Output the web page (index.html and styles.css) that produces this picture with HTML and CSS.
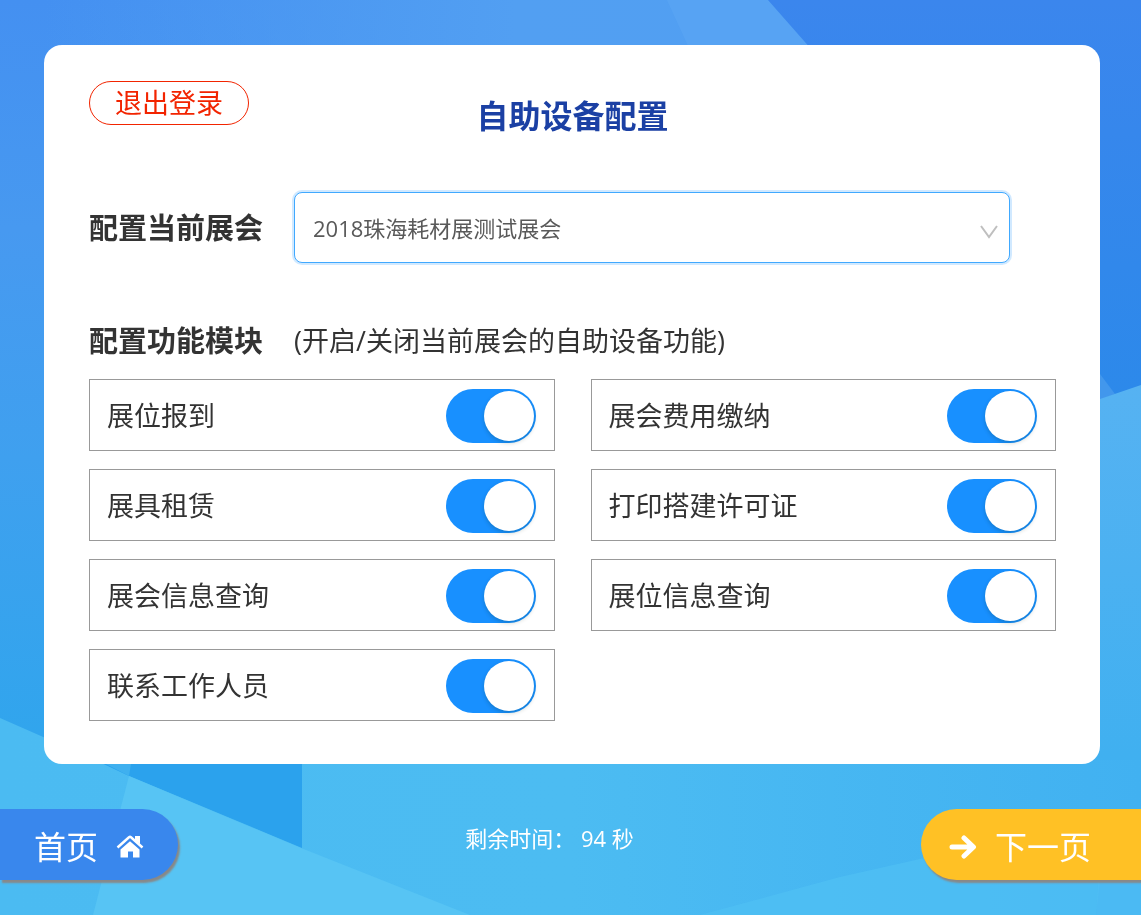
FILE: index.html
```html
<!DOCTYPE html>
<html lang="zh-CN">
<head>
<meta charset="utf-8">
<meta name="viewport" content="width=device-width, initial-scale=1">
<title>自助设备配置</title>
<link rel="stylesheet" href="styles.css">
</head>
<body>
<svg class="backdrop" viewBox="0 0 1141 915" preserveAspectRatio="none" aria-hidden="true">
  <defs>
    <linearGradient id="base" x1="0" y1="0" x2="0" y2="1">
      <stop offset="0" stop-color="#4490f1"/>
      <stop offset="0.25" stop-color="#4799f0"/>
      <stop offset="0.5" stop-color="#3fa0ef"/>
      <stop offset="0.8" stop-color="#31a5ed"/>
      <stop offset="1" stop-color="#35a6ee"/>
    </linearGradient>
    <linearGradient id="top" x1="0" y1="0" x2="1" y2="0">
      <stop offset="0" stop-color="#529ff2" stop-opacity="0"/>
      <stop offset="0.6" stop-color="#529ff2"/>
      <stop offset="1" stop-color="#519ff2"/>
    </linearGradient>
    <linearGradient id="deep" x1="0" y1="0" x2="0" y2="1">
      <stop offset="0" stop-color="#3b86ed"/>
      <stop offset="1" stop-color="#2c89ea"/>
    </linearGradient>
    <linearGradient id="right" x1="0" y1="0" x2="0" y2="1">
      <stop offset="0" stop-color="#56b2f2"/>
      <stop offset="0.7" stop-color="#40b0f0"/>
      <stop offset="1" stop-color="#42b5f1"/>
    </linearGradient>
    <linearGradient id="floor" x1="0" y1="0" x2="1" y2="0">
      <stop offset="0" stop-color="#4bbbf2"/>
      <stop offset="0.5" stop-color="#4cbcf2"/>
      <stop offset="1" stop-color="#41b1f1"/>
    </linearGradient>
  </defs>
  <rect width="1141" height="915" fill="url(#base)"/>
  <path d="M44 0H800L830 60H44Z" fill="url(#top)"/>
  <path d="M667 0H768L812 50H690Z" fill="#5ba7f3" opacity="0.6"/>
  <path d="M768 0H1141V386L1100 400L812 50Z" fill="url(#deep)"/>
  <path d="M1100 374L1115 394L1100 400Z" fill="#4297ec"/>
  <path d="M1100 399L1141 385V915H1080Z" fill="url(#right)"/>
  <path d="M0 718L50 740L106 760H1141V915H0Z" fill="url(#floor)"/>
  <path d="M95 760H302V848L129 776Z" fill="#2ba2ed"/>
  <path d="M106 764H131L129 776Z" fill="#3fb0ef"/>
  <path d="M129 776L301 848L470 915H93Z" fill="#57c4f4"/>
  <path d="M700 915L840 877L960 850L1100 880L1096 915Z" fill="#50c0f3" opacity="0.7"/>
  <path d="M1099 870L1141 860V915H1096Z" fill="#50bdf3" opacity="0.7"/>
</svg>

<main class="panel">
  <header class="panel-head">
    <button class="logout" type="button">退出登录</button>
    <h1 class="title">自助设备配置</h1>
  </header>

  <div class="exhibition">
    <label class="label" for="exhibition">配置当前展会</label>
    <div class="select-wrap">
      <select class="select" id="exhibition">
        <option>2018珠海耗材展测试展会</option>
      </select>
      <svg class="chevron" viewBox="0 0 18 14" aria-hidden="true"><path d="M1 1L9 12L17 1"/></svg>
    </div>
  </div>

  <section class="modules">
    <div class="modules-head">
      <h2 class="label">配置功能模块</h2>
      <p class="hint">(开启/关闭当前展会的自助设备功能)</p>
    </div>
    <div class="grid">
      <label class="module"><span>展位报到</span><input class="switch" type="checkbox" role="switch" checked></label>
      <label class="module"><span>展会费用缴纳</span><input class="switch" type="checkbox" role="switch" checked></label>
      <label class="module"><span>展具租赁</span><input class="switch" type="checkbox" role="switch" checked></label>
      <label class="module"><span>打印搭建许可证</span><input class="switch" type="checkbox" role="switch" checked></label>
      <label class="module"><span>展会信息查询</span><input class="switch" type="checkbox" role="switch" checked></label>
      <label class="module"><span>展位信息查询</span><input class="switch" type="checkbox" role="switch" checked></label>
      <label class="module"><span>联系工作人员</span><input class="switch" type="checkbox" role="switch" checked></label>
    </div>
  </section>
</main>

<footer class="footer">
  <button class="nav nav-home" type="button">
    <span>首页</span>
    <svg class="icon" viewBox="0 0 28 24" aria-hidden="true">
      <path d="M14 6.200L23.500 14.500V22.500H17V16.500H12V22.500H4.500V14.500Z"/>
      <path d="M19 1H24V9L19 5Z"/>
      <path class="roof" d="M1.500 12.500L13 2.200Q14 1.500 15 2.200L26.500 12.500"/>
    </svg>
  </button>
  <p class="timer">剩余时间：&nbsp;94 秒</p>
  <button class="nav nav-next" type="button">
    <svg class="icon arrow" viewBox="0 0 28 24" aria-hidden="true"><path d="M3 12H24M15 3L24.500 12L15 21"/></svg>
    <span>下一页</span>
  </button>
</footer>
</body>
</html>
```
FILE: styles.css
```css
* {
  box-sizing: border-box;
}

body {
  margin: 0;
  min-height: 100vh;
  display: flex;
  flex-direction: column;
  color: #333;
  font-family: "Open Sans", "Noto Sans CJK SC", sans-serif;
  font-size: 27px;
  line-height: 36px;
}

h1,
h2,
p {
  margin: 0;
}

button,
select {
  font: inherit;
  cursor: pointer;
}

.backdrop {
  position: fixed;
  inset: 0;
  width: 100%;
  height: 100%;
  z-index: -1;
}

.panel {
  margin: 45px 41px 0 44px;
  padding: 36px 44px 43px 45px;
  background: #fff;
  border-radius: 18px;
}

.panel-head {
  display: grid;
  grid-template-columns: 1fr auto 1fr;
  align-items: start;
}

.logout {
  justify-self: start;
  height: 44px;
  padding: 0 25px;
  border: 1px solid #f22400;
  border-radius: 22px;
  background: none;
  color: #f22400;
  line-height: 40px;
}

.title {
  margin-top: 11px;
  color: #1b40a4;
  font-size: 32px;
  line-height: 48px;
}

.exhibition {
  display: flex;
  align-items: center;
  gap: 31px;
  margin-top: 52px;
}

.label {
  flex: none;
  font-size: 29px;
  font-weight: 700;
  line-height: 40px;
}

.select-wrap {
  position: relative;
  flex: 1;
  margin-right: 46px;
}

.select {
  display: block;
  width: 100%;
  height: 71px;
  padding: 0 48px 0 18px;
  appearance: none;
  border: 1px solid #40a9ff;
  border-radius: 8px;
  box-shadow: 0 0 0 2px rgba(24, 144, 255, 0.2);
  background: #fff;
  color: #595959;
  font-size: 22px;
  outline: none;
}

.chevron {
  position: absolute;
  right: 12px;
  top: 33px;
  width: 18px;
  height: 14px;
  fill: none;
  stroke: #bfbfbf;
  stroke-width: 2;
  pointer-events: none;
}

.modules {
  margin-top: 58px;
}

.modules-head {
  display: flex;
  align-items: center;
  gap: 31px;
}

.grid {
  display: grid;
  grid-template-columns: 1fr 1fr;
  gap: 18px 36px;
  margin-top: 18px;
}

.module {
  display: flex;
  align-items: center;
  justify-content: space-between;
  height: 72px;
  padding: 2px 18px 0 17px;
  border: 1px solid #999;
}

.switch {
  appearance: none;
  display: flex;
  justify-content: flex-end;
  width: 90px;
  height: 54px;
  margin: 0;
  padding: 2px;
  border-radius: 27px;
  background: #bfbfbf;
  cursor: pointer;
}

.switch:checked {
  background: #1890ff;
}

.switch::before {
  content: "";
  width: 50px;
  height: 50px;
  border-radius: 50%;
  background: #fff;
  box-shadow: 0 2px 4px rgba(0, 35, 11, 0.2);
}

.switch:not(:checked) {
  justify-content: flex-start;
}

.footer {
  display: flex;
  justify-content: space-between;
  align-items: flex-start;
  margin-top: 45px;
  color: #fff;
}

.nav {
  display: flex;
  align-items: center;
  gap: 18px;
  height: 71px;
  padding: 4px 34px 0;
  border: 0;
  color: #fff;
  font-size: 32px;
  box-shadow: 2px 3px 2px #888;
}

.nav-home {
  border-radius: 0 36px 36px 0;
  background: #3987ed;
}

.nav-next {
  padding: 4px 50px 0 28px;
  border-radius: 36px 0 0 36px;
  background: #ffc125;
}

.icon {
  width: 28px;
  height: 24px;
  fill: #fff;
}

.roof {
  fill: none;
  stroke: #fff;
  stroke-width: 2.5;
}

.arrow {
  fill: none;
  stroke: #fff;
  stroke-width: 5;
  stroke-linecap: round;
  stroke-linejoin: round;
}

.timer {
  margin-top: 11px;
  font-size: 22px;
}
```
